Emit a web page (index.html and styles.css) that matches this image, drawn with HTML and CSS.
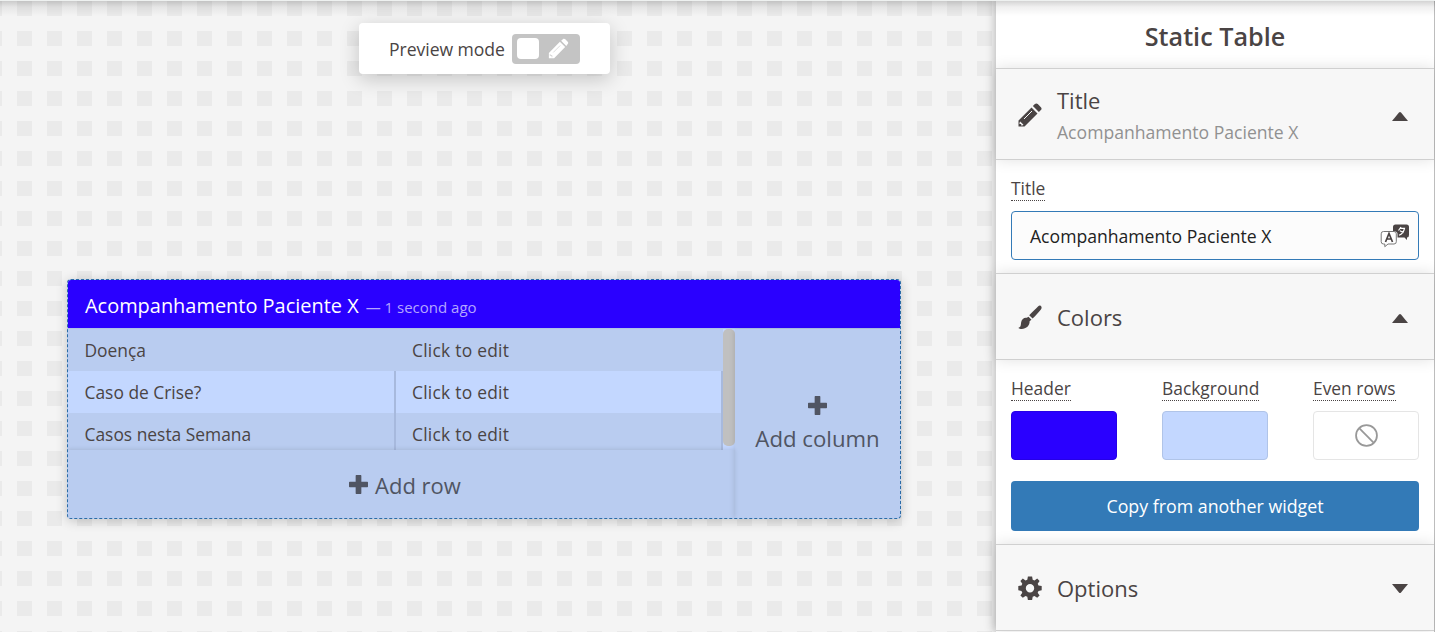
FILE: index.html
```
<!DOCTYPE html>
<html lang="en">
<head>
<meta charset="utf-8">
<title>Static Table</title>
<link rel="stylesheet" href="styles.css">
</head>
<body>
<div class="app">
  <main class="canvas">
    <div class="preview">
      <span class="preview-label">Preview mode</span>
      <div class="toggle">
        <div class="knob"></div>
        <svg class="toggle-icon" viewBox="0 0 24 24"><path fill="#fff" d="M1 23v-6L13.600 4.400l6 6L7 23zM15 3l2-1.700c1-.8 2-.6 2.800.2L22.500 4.200c.8.8.8 1.900 0 2.700L20.900 9z"/><path stroke="#c4c4c4" stroke-width=".7" fill="none" d="M6 16.500 14 8.500M2.500 18.500v1.500h2v2"/></svg>
      </div>
    </div>
    <section class="widget">
      <header class="widget-head"><span class="widget-title">Acompanhamento Paciente X</span><span class="widget-time">— 1 second ago</span></header>
      <div class="widget-body">
        <div class="left">
          <div class="scroller">
            <div class="rows">
              <div class="row first"><div class="cell">Doença</div><div class="cell">Click to edit</div></div>
              <div class="row light"><div class="cell">Caso de Crise?</div><div class="cell">Click to edit</div></div>
              <div class="row"><div class="cell">Casos nesta Semana</div><div class="cell">Click to edit</div></div>
            </div>
            <div class="track"><div class="thumb"></div></div>
          </div>
          <div class="add-row">
            <svg class="plus" viewBox="0 0 18 18"><path d="M7 0h4q.7 0 .7.700V6.300h5.600q.7 0 .7.700v4q0 .7-.7.700h-5.600v5.600q0 .7-.7.700H7q-.7 0-.7-.7v-5.600H.7Q0 11.700 0 11V7q0-.7.7-.7h5.600V.7Q6.300 0 7 0z"/></svg>
            <span>Add row</span>
          </div>
        </div>
        <div class="add-col">
          <svg class="plus" viewBox="0 0 18 18"><path d="M7 0h4q.7 0 .7.700V6.300h5.600q.7 0 .7.700v4q0 .7-.7.700h-5.600v5.600q0 .7-.7.700H7q-.7 0-.7-.7v-5.600H.7Q0 11.700 0 11V7q0-.7.7-.7h5.600V.7Q6.300 0 7 0z"/></svg>
          <span>Add column</span>
        </div>
      </div>
    </section>
  </main>
  <aside class="side">
    <h1 class="side-title"><span>Static Table</span></h1>
    <div class="sec-head sec-title">
      <svg class="sec-icon" viewBox="0 0 24 24"><path d="M.5 23.500v-6L13.500 4.500l6 6L6.500 23.500zM14.900 3.100l2-2c.9-.9 2-.9 2.900 0l3.100 3.100c.9.9.9 2 0 2.900l-2 2z"/><path stroke="#f7f7f7" stroke-width="1" fill="none" d="M6 16 14 8"/><path fill="#f7f7f7" d="M2.200 18.500 5.500 21.800 4.300 22.600H3.200v-1.700H1.500v-1.200z"/></svg>
      <div class="sec-text"><span class="sec-name">Title</span><span class="sec-sub">Acompanhamento Paciente X</span></div>
      <svg class="caret" viewBox="0 0 16 9"><path d="M0 9 7 .6q1-1 2 0L16 9z"/></svg>
    </div>
    <div class="sec-body body-title">
      <div class="label"><span>Title</span></div>
      <div class="input">
        <span>Acompanhamento Paciente X</span>
        <svg class="lang" viewBox="0 0 30 24"><path fill="#4a4444" d="M15.500.5h11q2.500 0 2.500 2.500v8q0 2.500-2 2.500v2.500l-2.500-2.500h-7V10q0-2.500-2.500-2.500h-2V3q0-2.500 2.500-2.500z"/><path fill="none" stroke="#fff" stroke-width="1.200" d="M21 3 18.500 6.500M20.500 4.300h4q-1 5-5.500 7M20 6.800l3.500 2"/><path fill="#fff" stroke="#777" stroke-width="1" d="M3.500 7.500h10.500q2.300 0 2.300 2.300v7.900q0 2.300-2.300 2.300H8l-3.200 2.700V20H3.500Q1.200 20 1.200 17.700V9.800Q1.200 7.500 3.500 7.500z"/><path fill="none" stroke="#4a4444" stroke-width="1.700" d="M5.500 18 9 9.500 12.500 18M6.700 15h4.600"/></svg>
      </div>
    </div>
    <div class="sec-head sec-mid">
      <svg class="sec-icon" viewBox="0 0 24 24"><path d="M22.600.8c1.300 1 1.300 2.500.3 3.800-2 2.600-5 5.900-8.300 9l-3.400-3.300C14.500 6.800 17.600 4 20 1.600c1-1 1.800-1.300 2.600-.8zM10.500 11.800l3 3c-.7.6-1.400 1.100-1.900 1.500.3 4.200-3.300 7.600-7.900 7.600-1.400 0-2.600-.5-3.500-1 3-.8 2.500-3.300 3-6 .6-2.900 2.900-4.600 5.600-4.100z"/></svg>
      <span class="sec-name">Colors</span>
      <svg class="caret" viewBox="0 0 16 9"><path d="M0 9 7 .6q1-1 2 0L16 9z"/></svg>
    </div>
    <div class="sec-body body-colors">
      <div class="swatches">
        <div><div class="label"><span>Header</span></div><div class="swatch blue"></div></div>
        <div><div class="label"><span>Background</span></div><div class="swatch pale"></div></div>
        <div><div class="label"><span>Even rows</span></div><div class="swatch none"><svg viewBox="0 0 22 22"><circle cx="11" cy="11" r="10"/><path d="M4 4 18 18"/></svg></div></div>
      </div>
      <div class="button"><span>Copy from another widget</span></div>
    </div>
    <div class="sec-head sec-mid">
      <svg class="sec-icon" viewBox="0 0 24 24"><path fill-rule="evenodd" d="M9.900.5h4.200l.6 3.200 1.800.8 2.700-1.900 2.400 2.400-1.900 2.700.8 1.800 3.200.6v4.200l-3.200.6-.8 1.800 1.900 2.700-2.400 2.400-2.700-1.900-1.800.8-.6 3.200H9.900l-.6-3.200-1.800-.8-2.700 1.900-2.400-2.400 1.900-2.700-.8-1.800L.3 14.300v-4.200l3.200-.6.8-1.800L2.400 5l2.400-2.400 2.700 1.900 1.800-.8zM12 8a4.200 4.200 0 1 0 0 8.400A4.200 4.200 0 1 0 12 8z"/></svg>
      <span class="sec-name">Options</span>
      <svg class="caret down" viewBox="0 0 16 9"><path d="M0 9 7 .6q1-1 2 0L16 9z"/></svg>
    </div>
  </aside>
  <div class="top-shade"></div>
</div>
</body>
</html>
```
FILE: styles.css
```
* { box-sizing: border-box; }
body { margin: 0; font-family: "Open Sans", "Noto Sans", sans-serif; font-size: 17.6px; color: #4a4444; }
svg { display: block; fill: #4a4444; flex: none; }
span { white-space: nowrap; }
.app { position: relative; display: flex; width: 1435px; height: 632px; overflow: hidden; }
.canvas {
  width: 996px; height: 632px; display: flex; flex-direction: column; align-items: flex-start;
  background-color: #f4f4f4;
  background-image: conic-gradient(from 0deg, #f4f4f4 0 25%, #eaeaea 0 50%, #f4f4f4 0);
  background-size: 30px 30px; background-position: 2px -14px;
}
.top-shade { position: absolute; left: 0; top: 0; width: 100%; height: 16px; border-top: 1px solid #eef1f0; background: linear-gradient(rgba(0,0,0,.17), rgba(0,0,0,.06) 40%, transparent); }

.preview { display: flex; align-items: center; width: 251px; height: 51px; margin: 23px 0 0 359px; padding-left: 30px; background: #fff; border-radius: 4px; box-shadow: 0 5px 20px rgba(0,0,0,.2); }
.preview-label { width: 123px; line-height: 24px; letter-spacing: -.05px; }
.toggle { display: flex; align-items: center; width: 68px; height: 30px; padding-left: 5px; gap: 9px; background: #c4c4c4; border-radius: 4px; }
.knob { width: 22px; height: 21px; background: #fff; border-radius: 4px; }
.toggle-icon { width: 21px; height: 21px; }

.widget { width: 834px; height: 240px; margin: 205px 0 0 67px; border: 1px dashed #2a6ca6; border-radius: 4px; background: #b9ccf0; box-shadow: 0 2px 12px rgba(0,0,0,.2); overflow: hidden; }
.widget-head { display: flex; align-items: baseline; height: 48px; line-height: 51px; padding-left: 17px; gap: 7px; background: #2a00ff; color: #fff; }
.widget-title { font-size: 19.950px; }
.widget-time { font-size: 15px; color: #b4a6ff; }
.widget-body { display: flex; height: 190px; border-top: 1px solid #b0c4e6; }
.left { width: 667px; display: flex; flex-direction: column; }
.scroller { display: flex; height: 121px; overflow: hidden; }
.rows { width: 655px; font-size: 17.400px; }
.row { display: flex; height: 42px; line-height: 43px; background: #b9ccf0; }
.row.light { background: #c3d7ff; }
.cell { width: 328px; padding-left: 16.500px; border-right: 2px solid #a7b9dd; }
.cell:last-child { width: 327px; padding-left: 16px; letter-spacing: .25px; }
.first .cell { border-color: transparent; }
.track { width: 12px; background: #c3d7ff; }
.thumb { height: 117px; border-radius: 5px; background: #c0c0c0; }
.add-row { flex: 1; display: flex; justify-content: center; align-items: center; gap: 7px; padding: 0 0 0 7px; font-size: 22px; color: #505563; box-shadow: 0 -1px 4px rgba(0,0,0,.1); }
.add-row span { padding-top: 2px; }
.add-col { width: 165px; display: flex; flex-direction: column; align-items: center; padding-top: 67px; font-size: 22.200px; line-height: 30px; color: #505563; box-shadow: -1px 0 5px rgba(0,0,0,.1); }
.add-col span { margin-top: 9px; }
.plus { width: 19px; height: 19px; fill: #505563; }

.side { position: relative; width: 439px; height: 632px; background: #fff; border-right: 1px solid #bdbdbd; box-shadow: 0 0 10px rgba(0,0,0,.3); }
.side-title { margin: 0; height: 68px; padding-top: 4px; line-height: 64px; text-align: center; font-size: 25.200px; font-weight: 600; }
.sec-head { position: relative; display: flex; align-items: center; padding: 0 26px 0 22px; background: #f7f7f7; border: solid #d0d0d0; border-width: 1px 0; box-shadow: 0 0 14px rgba(0,0,0,.12); }
.sec-title { height: 92px; padding-top: 2px; }
.sec-mid { height: 87px; }
.sec-icon { width: 24px; height: 24px; margin-right: 15px; }
.sec-title .sec-icon { margin-top: -1px; }
.sec-name { font-size: 22px; line-height: 32px; }
.sec-text { display: flex; flex-direction: column; }
.sec-sub { height: 31px; line-height: 33px; color: #919191; }
.caret { width: 16px; height: 9px; margin: 3px 0 0 auto; }
.sec-title .caret { margin-top: 2px; }
.caret.down { transform: rotate(180deg); margin-top: 2px; }
.sec-body { padding: 0 15px; }
.body-title { height: 113px; padding-top: 16px; }
.label { height: 35px; font-size: 17.400px; }
.label span { display: inline-block; height: 25px; line-height: 24px; border-bottom: 1px dotted #4a4444; }
.input { display: flex; justify-content: space-between; align-items: center; height: 49px; padding: 0 8px 0 18px; border: 1px solid #337ab7; border-radius: 4px; background: #fcfcfc; color: #222; }
.input span { line-height: 24px; }
.lang { width: 30px; height: 24px; }
.body-colors { height: 184px; padding-top: 16px; }
.swatches { display: flex; justify-content: space-between; }
.swatch { width: 106px; height: 49px; border-radius: 4px; }
.blue { background: #2a00ff; border: 1px solid #2600e6; }
.pale { background: #c3d7ff; border: 1px solid #b0c4e8; }
.none { display: flex; align-items: center; justify-content: center; border: 1px solid #e5e5e5; }
.none svg { width: 23px; height: 23px; fill: none; stroke: #999; stroke-width: 1.700; }
.button { height: 50px; margin-top: 21px; border-radius: 4px; background: #337ab7; color: #fff; font-size: 17.800px; line-height: 50px; text-align: center; }
```
